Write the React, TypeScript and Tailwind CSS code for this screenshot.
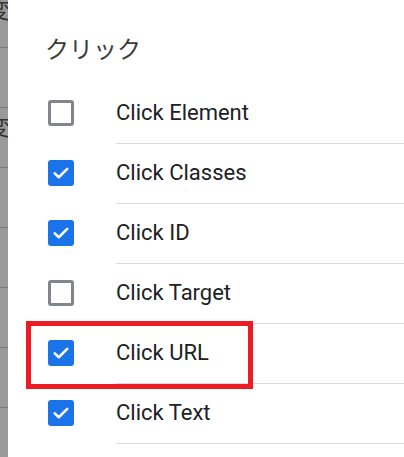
import React from "react";

const items = [
  { label: "Click Element", checked: false },
  { label: "Click Classes", checked: true },
  { label: "Click ID", checked: true },
  { label: "Click Target", checked: false },
  { label: "Click URL", checked: true },
  { label: "Click Text", checked: true },
];

function Box({ checked }: { checked: boolean }) {
  if (checked) {
    return (
      <div className="w-[26px] h-[26px] rounded-[3px] bg-[#1a73e8] flex items-center justify-center shrink-0">
        <svg width="20" height="20" viewBox="0 0 24 24">
          <path d="M4.5 12.5l4.8 4.6L19.5 7" fill="none" stroke="#ffffff" strokeWidth="3" strokeLinecap="round" strokeLinejoin="round" />
        </svg>
      </div>
    );
  }
  return <div className="w-[26px] h-[26px] rounded-[3px] border-[3px] border-[#80868b] bg-white shrink-0" />;
}

export default function App() {
  const strip = [0, 1, 2, 3, 4, 5, 6, 7];
  return (
    <div className="w-[404px] h-[457px] flex overflow-hidden bg-white" style={{ fontFamily: "Roboto, 'Noto Sans CJK JP', sans-serif" }}>
      <div className="w-[8px] shrink-0 bg-[#999999] flex flex-col overflow-hidden">
        {strip.map((i) => (
          <div key={i} className={`relative shrink-0 border-b border-[#7a7a7a] overflow-hidden ${i === 0 ? "h-[48px]" : "h-[60px]"}`}>
            {(i === 0 || i === 2) && (
              <span className={`absolute right-[-2px] text-[22px] leading-none text-[#333] ${i === 0 ? "top-[-3px]" : "top-[6px]"}`} style={{ fontFamily: "'Noto Sans CJK JP', sans-serif" }}>
                変
              </span>
            )}
          </div>
        ))}
      </div>
      <div className="flex-1 pl-[40px] flex flex-col">
        <div className="h-[84px] pt-[31px] -ml-[3px] text-[24px] leading-[34px] text-[#3c3c3c]" style={{ fontFamily: "'Noto Sans CJK JP', sans-serif" }}>
          クリック
        </div>
        {items.map((it) => (
          <div key={it.label} className="relative flex h-[60px]">
            <div className="w-[68px] flex items-center pb-[2px]">
              <Box checked={it.checked} />
            </div>
            <div className="flex-1 flex items-center pb-[3px] border-b border-[#dadce0] text-[22px] font-normal text-[#202124]">
              {it.label}
            </div>
            {it.label === "Click URL" && (
              <div className="absolute left-[-22px] top-[-3px] w-[227px] h-[68px] border-[5px] border-[#ed1c24]" />
            )}
          </div>
        ))}
      </div>
    </div>
  );
}
